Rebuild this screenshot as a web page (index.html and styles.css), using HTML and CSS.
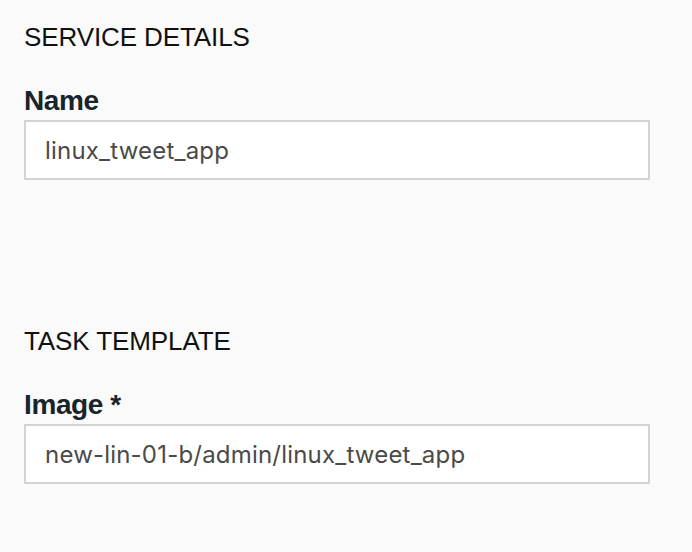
FILE: index.html
```html
<!DOCTYPE html>
<html lang="en">
<head>
<meta charset="utf-8">
<title>Service form</title>
<link rel="stylesheet" href="styles.css">
</head>
<body>
<main class="form">
  <section class="group">
    <h2 class="group-title">SERVICE DETAILS</h2>
    <label class="field-label" for="name">Name</label>
    <input class="field-input" id="name" type="text" value="linux_tweet_app" readonly>
  </section>
  <section class="group group-next">
    <h2 class="group-title">TASK TEMPLATE</h2>
    <label class="field-label" for="image">Image *</label>
    <input class="field-input" id="image" type="text" value="new-lin-01-b/admin/linux_tweet_app" readonly>
  </section>
</main>
</body>
</html>
```

FILE: styles.css
```css
html, body {
  margin: 0;
  padding: 0;
  background: #fafafa;
}

body {
  font-family: "Liberation Sans", Arial, sans-serif;
}

.form {
  display: flex;
  flex-direction: column;
  padding: 22px 0 0 24px;
  width: 626px;
}

.group {
  display: flex;
  flex-direction: column;
}

.group-next {
  margin-top: 146px;
}

.group-title {
  margin: 0;
  font-size: 26px;
  line-height: 30px;
  font-weight: normal;
  color: #111;
  letter-spacing: -0.1px;
}

.field-label {
  margin-top: 33px;
  font-size: 28px;
  line-height: 32px;
  font-weight: bold;
  color: #17242c;
  letter-spacing: -0.4px;
}

.field-input {
  margin: 3px 0 0 0;
  box-sizing: border-box;
  width: 626px;
  height: 60px;
  border: 2px solid #d0d4d4;
  border-radius: 0;
  background: #fff;
  padding: 1px 0 0 19px;
  font-family: Inter, "Liberation Sans", sans-serif;
  font-size: 24px;
  letter-spacing: 0.2px;
  color: #4a4a4a;
  outline: none;
}
```
